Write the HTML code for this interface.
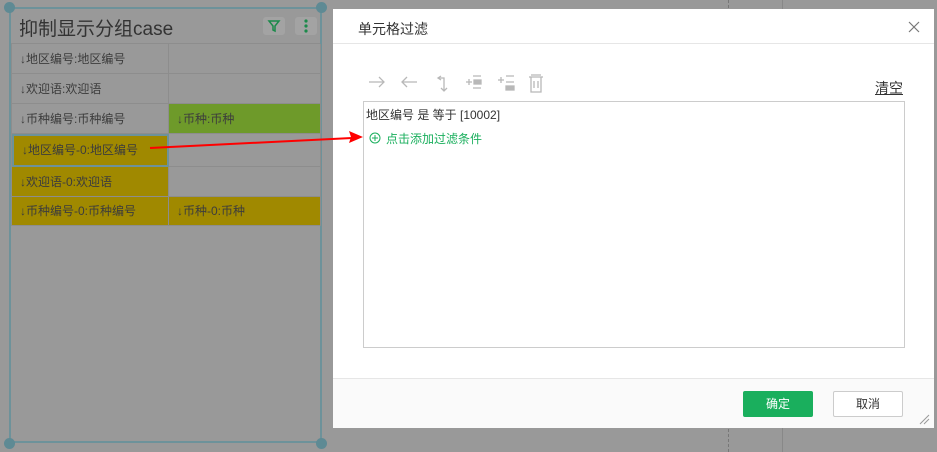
<!DOCTYPE html>
<html><head><meta charset="utf-8"><style>
*{margin:0;padding:0;box-sizing:border-box}
body{width:937px;height:452px;background:#999;position:relative;overflow:hidden;font-family:"Liberation Sans","Noto Sans CJK SC",sans-serif;color:#3a3a3a}
.abs{position:absolute}
.frame{left:9px;top:7px;width:313px;height:436px;border:2px solid #6d929a}
.dot{width:11px;height:11px;border-radius:50%;background:#5e8a94}
.cell{position:absolute;font-size:12px;line-height:30px;padding-left:8px;color:#3c3c3c;border-right:1px solid #8d8d8d;border-bottom:1px solid #8d8d8d}
.y{background:#a08900}
.g{background:#6e9a2a}
.dlg{left:333px;top:9px;width:601px;height:419px;background:#fff}
</style></head><body>
<div class="abs" style="left:728px;top:0;width:0;height:452px;border-left:1px dashed #777"></div>
<div class="abs" style="left:782px;top:0;width:1px;height:452px;background:#888"></div>
<div class="abs frame"></div>
<div class="abs dot" style="left:4px;top:2px"></div>
<div class="abs dot" style="left:316px;top:2px"></div>
<div class="abs dot" style="left:4px;top:438px"></div>
<div class="abs dot" style="left:316px;top:438px"></div>
<div class="abs" style="left:19px;top:14px;font-size:19px;color:#333">抑制显示分组case</div>
<div class="abs" style="left:263px;top:17px;width:22px;height:18px;background:#a3a3a3;border-radius:3px"><svg width="22" height="18"><path d="M6 4h10l-4 5v5l-2-1v-4z" fill="none" stroke="#1b8a4a" stroke-width="1.5"/></svg></div>
<div class="abs" style="left:295px;top:17px;width:22px;height:18px;background:#a3a3a3;border-radius:3px"><svg width="22" height="18"><circle cx="11" cy="4" r="1.6" fill="#1b8a4a"/><circle cx="11" cy="9" r="1.6" fill="#1b8a4a"/><circle cx="11" cy="14" r="1.6" fill="#1b8a4a"/></svg></div>
<div class="abs" style="left:11px;top:43px;width:309px;height:183px;border-top:1px solid #8d8d8d;border-left:1px solid #8d8d8d">
<div class="cell" style="left:0;top:0;width:157px;height:30px">↓地区编号:地区编号</div>
<div class="cell" style="left:157px;top:0;width:152px;height:30px"></div>
<div class="cell" style="left:0;top:30px;width:157px;height:30px">↓欢迎语:欢迎语</div>
<div class="cell" style="left:157px;top:30px;width:152px;height:30px"></div>
<div class="cell" style="left:0;top:60px;width:157px;height:30px">↓币种编号:币种编号</div>
<div class="cell g" style="left:157px;top:60px;width:152px;height:30px">↓币种:币种</div>
<div class="cell y" style="left:0;top:90px;width:157px;height:33px;border:2px solid #6d929a;line-height:29px">↓地区编号-0:地区编号</div>
<div class="cell" style="left:157px;top:90px;width:152px;height:33px"></div>
<div class="cell y" style="left:0;top:123px;width:157px;height:30px">↓欢迎语-0:欢迎语</div>
<div class="cell" style="left:157px;top:123px;width:152px;height:30px"></div>
<div class="cell y" style="left:0;top:153px;width:157px;height:29px;line-height:28px">↓币种编号-0:币种编号</div>
<div class="cell y" style="left:157px;top:153px;width:152px;height:29px;line-height:28px">↓币种-0:币种</div>
</div>
<div class="abs dlg">
<div class="abs" style="left:0;top:0;width:601px;height:35px;border-bottom:1px solid #e6e6e6;background:#fff"></div>
<div class="abs" style="left:25px;top:10px;font-size:14px;color:#333">单元格过滤</div>
<svg class="abs" style="left:575px;top:12px" width="12" height="12"><path d="M1 1l10 10M11 1L1 11" stroke="#777" stroke-width="1.2"/></svg>
<svg class="abs" style="left:35px;top:63px" width="200" height="22" fill="none" stroke="#b8b8b8" stroke-width="1.3">
<path d="M1 10h15M11 5l5 5-5 5"/>
<path d="M49 10h-15M39 5l-5 5 5 5"/>
<path d="M73 4l-3 2 3 2M70 6h6v13M73 16l3 3 3-3"/>
<path d="M98 10h6M101 7v6M105 4h8M105 16h8"/><rect x="106" y="8" width="7" height="4" fill="#b8b8b8"/>
<path d="M130 8h6M133 5v6M138 4h8M138 10h8"/><rect x="138" y="14" width="8" height="4" fill="#b8b8b8"/>
<path d="M163 3h10M161 5h14M163 5v15h10V5M166 9v7M170 9v7"/>
</svg>
<div class="abs" style="left:542px;top:69px;font-size:14px;color:#333;text-decoration:underline">清空</div>
<div class="abs" style="left:30px;top:92px;width:542px;height:247px;border:1px solid #ccc"></div>
<div class="abs" style="left:33px;top:97px;font-size:12px;color:#333">地区编号 是 等于 [10002]</div>
<svg class="abs" style="left:36px;top:123px" width="12" height="12"><circle cx="6" cy="6" r="5" fill="none" stroke="#1aaf5d"/><path d="M6 3v6M3 6h6" stroke="#1aaf5d"/></svg>
<div class="abs" style="left:53px;top:121px;font-size:12px;color:#1aaf5d">点击添加过滤条件</div>
<div class="abs" style="left:0;top:369px;width:601px;height:50px;background:#fafafa;border-top:1px solid #e6e6e6"></div>
<div class="abs" style="left:410px;top:382px;width:70px;height:26px;background:#1aaf5d;border-radius:2px;color:#fff;font-size:12px;text-align:center;line-height:26px">确定</div>
<div class="abs" style="left:500px;top:382px;width:70px;height:26px;background:#fff;border:1px solid #ccc;border-radius:2px;color:#333;font-size:12px;text-align:center;line-height:24px">取消</div>
<svg class="abs" style="left:585px;top:404px" width="12" height="12"><path d="M2 11l9-9M6 11l5-5" stroke="#999"/></svg>
</div>
<svg class="abs" style="left:0;top:0" width="937" height="452"><line x1="150" y1="148" x2="352" y2="138" stroke="#f00" stroke-width="2"/><path d="M363 137l-14-6 2 6-2 6z" fill="#f00"/></svg>
</body></html>
